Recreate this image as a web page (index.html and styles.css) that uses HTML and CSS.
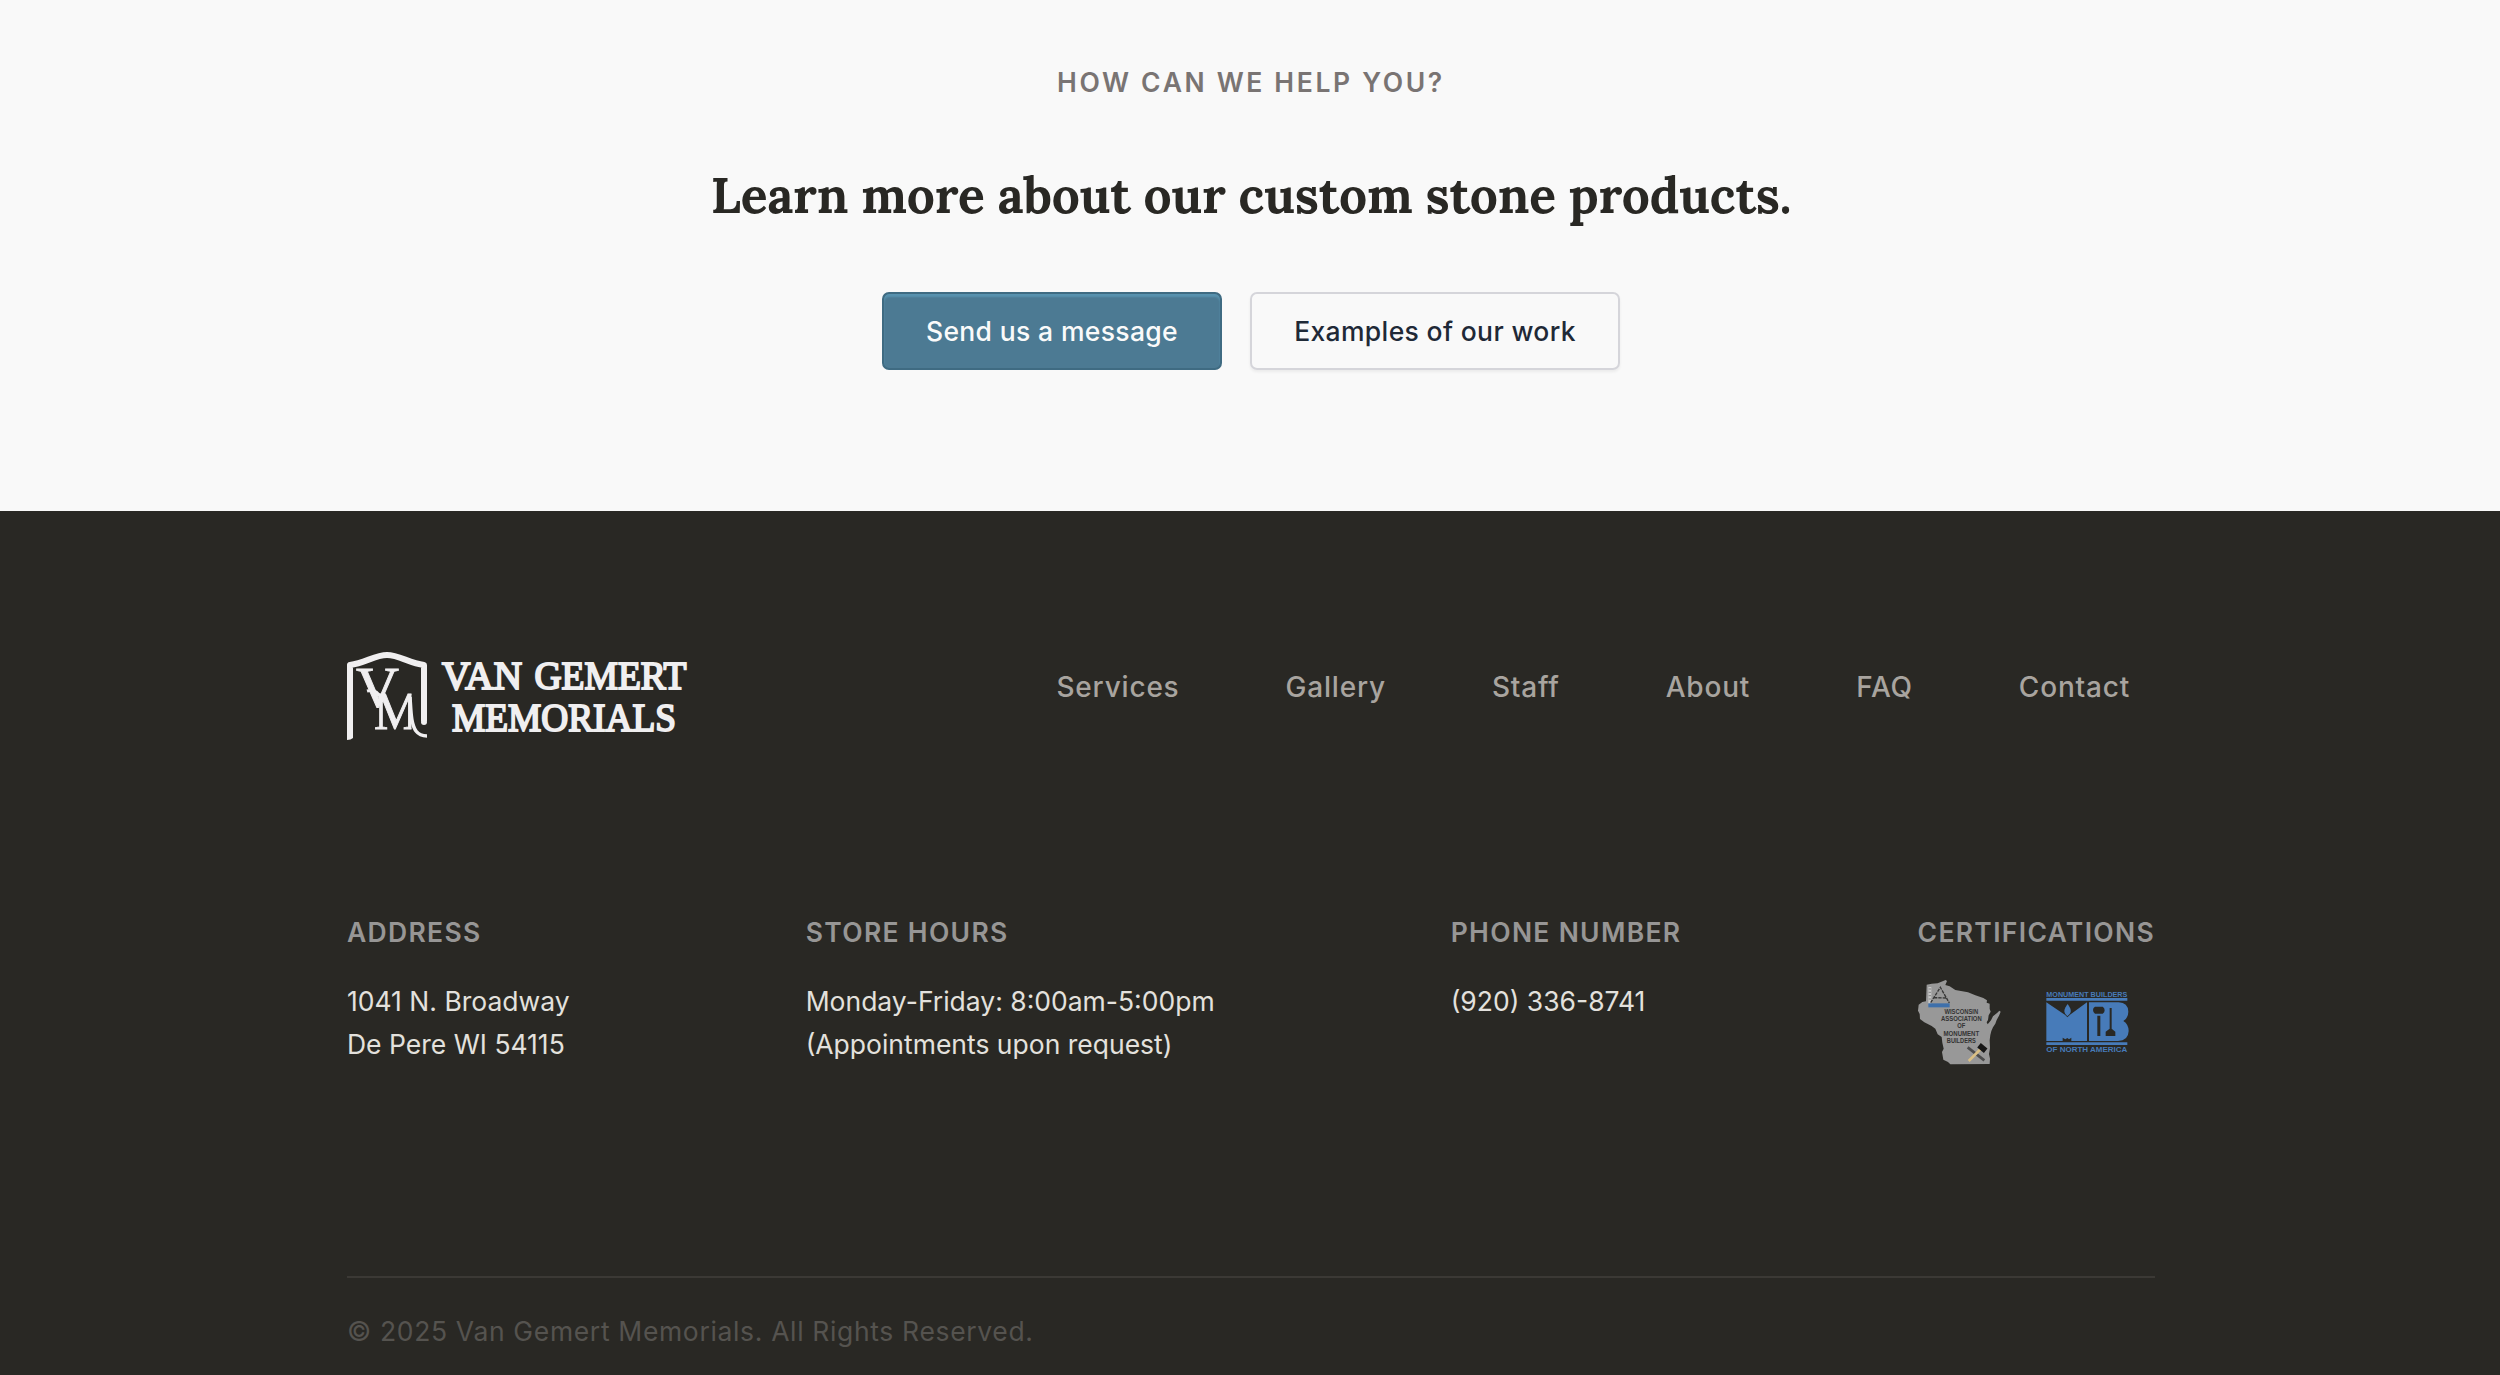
FILE: index.html
```html
<!DOCTYPE html>
<html lang="en">
<head>
<meta charset="utf-8">
<title>Van Gemert Memorials</title>
<link rel="stylesheet" href="styles.css">
</head>
<body>
<section class="cta">
  <p class="cta-label">HOW CAN WE HELP YOU?</p>
  <h2 class="cta-title">Learn more about our custom stone products.</h2>
  <div class="cta-actions">
    <a class="btn btn-primary">Send us a message</a>
    <a class="btn btn-secondary">Examples of our work</a>
  </div>
</section>
<footer class="footer">
  <div class="footer-top">
    <svg class="logo" viewBox="0 0 340 88" width="340" height="88">
      <clipPath id="m-clip"><path d="M26 36H64.500V88H26z"/></clipPath>
      <!-- stone outline -->
      <path d="M3 84V13C18 11 28 3 40 3S62 11 77 13V69" fill="none" stroke="#f0eff0" stroke-width="6" stroke-linejoin="round"/>
      <circle cx="77" cy="70" r="3" fill="#f0eff0"/>
      <path d="M0 83H6V86Q4 88 0 88z" fill="#f0eff0"/>
      <text class="mono" x="9" y="54.500" font-size="58" textLength="43" lengthAdjust="spacingAndGlyphs">V</text>
      <text class="mono" x="27" y="77" font-size="52" textLength="45" lengthAdjust="spacingAndGlyphs" clip-path="url(#m-clip)">M</text>
      <path d="M20 39C27 37 31 40 34 46" fill="none" stroke="#f0eff0" stroke-width="3"/>
      <path d="M63 45C64 60 64 72 69 79C72 83 76 84 80 84" fill="none" stroke="#f0eff0" stroke-width="3.500"/>
      <g class="wordmark">
        <text x="95" y="37" textLength="80" lengthAdjust="spacingAndGlyphs">VAN</text>
        <text x="187.500" y="37" textLength="152" lengthAdjust="spacingAndGlyphs">GEMERT</text>
        <text x="105" y="78.500" textLength="224" lengthAdjust="spacingAndGlyphs">MEMORIALS</text>
      </g>
    </svg>
    <nav class="nav">
      <a>Services</a><a>Gallery</a><a>Staff</a><a>About</a><a>FAQ</a><a>Contact</a>
    </nav>
  </div>
  <div class="info">
    <div class="col"><h3>ADDRESS</h3><p>1041 N. Broadway<br>De Pere WI 54115</p></div>
    <div class="col"><h3>STORE HOURS</h3><p>Monday-Friday: 8:00am-5:00pm<br>(Appointments upon request)</p></div>
    <div class="col"><h3>PHONE NUMBER</h3><p>(920) 336-8741</p></div>
    <div class="col"><h3>CERTIFICATIONS</h3>
      <div class="badges">
        <svg width="84" height="85" viewBox="25 30 252 255">
          <path fill="#989898" d="M51 44L66 41 84 40 108 30 112 33 107 45 120 49 137 60 175 67 197 76 221 84 232 91 231 98 240 101 240 117 243 125 237 136 235 150 231 157 234 163 244 151 250 139 263 128 269 122 273 125 268 137 261 150 257 161 250 172 245 183 242 195 240 211 241 235 238 252 241 266 240 282 122 283 115 276 101 269 97 246 102 236 98 218 96 201 84 193 77 176 66 168 44 157 31 147 30 132 25 122 27 104 38 96 49 94z"/>
          <path fill="#c6c6c6" d="M56 51H65V101H56z"/>
          <path d="M57 57H64M57 67H64M57 77H64M57 87H64" stroke="#858585" stroke-width="3"/>
          <path fill="#3e70ab" d="M56 100H120V112H56z"/>
          <path d="M63 98L92 52L119 99M73 83L112 84" fill="none" stroke="#363636" stroke-width="4" stroke-dasharray="10 3"/>
          <g class="wi-text">
            <text x="155" y="132" textLength="101" lengthAdjust="spacingAndGlyphs">WISCONSIN</text>
            <text x="155" y="153" textLength="122" lengthAdjust="spacingAndGlyphs">ASSOCIATION</text>
            <text x="155" y="175" textLength="24" lengthAdjust="spacingAndGlyphs">OF</text>
            <text x="155" y="197" textLength="107" lengthAdjust="spacingAndGlyphs">MONUMENT</text>
            <text x="155" y="218" textLength="87" lengthAdjust="spacingAndGlyphs">BUILDERS</text>
          </g>
          <path d="M174 232L224 271" stroke="#4c4c4c" stroke-width="8"/>
          <path d="M177 273L213 237" stroke="#d9bf85" stroke-width="8"/>
          <path d="M208 226L228 242" stroke="#161616" stroke-width="17"/>
        </svg>
        <svg class="mbna" width="83" height="62" viewBox="32 33 249 186">
          <g class="mb-text">
            <text x="33" y="50" textLength="243" lengthAdjust="spacingAndGlyphs">MONUMENT BUILDERS</text>
            <text x="33" y="216" textLength="243" lengthAdjust="spacingAndGlyphs">OF NORTH AMERICA</text>
          </g>
          <path fill="#477bb9" d="M33 54H276V62H33zM33 187H276V195H33z"/>
          <path fill="#477bb9" d="M33 67L84 101 96 108 108 101 155 67V183H33z"/>
          <path fill="#292824" d="M82 173L90 178 96 174 101 178 108 173V183H82z"/>
          <path fill="#292824" d="M97 65C84 84 82 94 89 104L96 112 104 104C112 94 109 84 97 65z"/>
          <path fill="#477bb9" d="M97 72C86 87 85 94 90 102L96 109 103 102C109 95 107 86 97 72z"/>
          <path fill="#477bb9" d="M161 67H250Q278 68 279 95 279 114 264 123 280 133 280 153 279 182 248 183H161z"/>
          <path fill="#292824" d="M179 80H202Q208 84 208 91T202 101H179Q173 97 173 90T179 80zM186 107H195V168H186zM223 84H229V146L240 155V168H211V155L223 146z"/>
        </svg>
      </div>
    </div>
  </div>
  <p class="copyright">© 2025 Van Gemert Memorials. All Rights Reserved.</p>
</footer>
</body>
</html>
```
FILE: styles.css
```css
* { box-sizing: border-box; margin: 0; padding: 0; }
body {
  height: 1375px;
  overflow: hidden;
  background: #292824;
  font-family: Inter, "Liberation Sans", sans-serif;
  font-size: 26.5px;
}
svg { overflow: visible; }
.cta {
  height: 511px;
  padding: 62px 0 0 2px;
  background: #f9f9f9;
  display: flex;
  flex-direction: column;
  align-items: center;
}
.cta-label {
  line-height: 40px;
  font-weight: 600;
  letter-spacing: 2.65px;
  color: #797473;
}
.cta-title {
  margin-top: 63px;
  font: 700 49.7px/60px Lora, "Noto Serif", "Liberation Serif", serif;
  letter-spacing: -0.15px;
  color: #292824;
}
.cta-actions { display: flex; gap: 28px; margin-top: 67px; }
.btn {
  height: 78px;
  border: 2px solid;
  border-radius: 7px;
  display: flex;
  align-items: center;
  justify-content: center;
  font-weight: 500;
  letter-spacing: 0.35px;
}
.btn-primary {
  width: 340px;
  background: #4c7a93;
  border-color: #3f6b82;
  color: #fafafa;
  box-shadow: inset 0 3px 2px #5892ae;
}
.btn-secondary {
  width: 370px;
  border-color: #d5d5da;
  color: #1f2937;
  box-shadow: 0 2px 3px rgba(0, 0, 0, 0.06);
}
.footer { width: 1808px; margin-left: 347px; padding-top: 141px; }
.footer-top { display: flex; justify-content: space-between; align-items: flex-start; height: 88px; }
.logo text { fill: #f0eff0; stroke: #f0eff0; font-family: "Liberation Serif", serif; }
.logo .mono { stroke-width: 0.9px; }
.logo .wordmark text { font-size: 40.5px; stroke-width: 2px; }
.nav {
  display: flex;
  gap: 106px;
  padding-right: 25px;
  font-size: 28px;
  font-weight: 500;
  line-height: 71px;
  letter-spacing: 0.8px;
  color: #a8a49f;
}
.info { display: flex; justify-content: space-between; margin-top: 171px; height: 365px; }
.col h3 {
  font-size: 26.5px;
  font-weight: 600;
  line-height: 43px;
  letter-spacing: 1.32px;
  color: #979695;
}
.col p { margin-top: 26px; line-height: 43.2px; color: #e3e1dd; }
.badges { display: flex; gap: 44px; margin-top: 26px; }
.mbna { margin-top: 11px; }
.wi-text { font: 700 21px "Liberation Sans", sans-serif; fill: #333; text-anchor: middle; }
.mb-text { font: 700 24px "Liberation Sans", sans-serif; fill: #477bb9; }
.copyright {
  border-top: 2px solid #3b3935;
  padding-top: 31px;
  line-height: 44px;
  letter-spacing: 0.65px;
  color: #55534f;
}
```
